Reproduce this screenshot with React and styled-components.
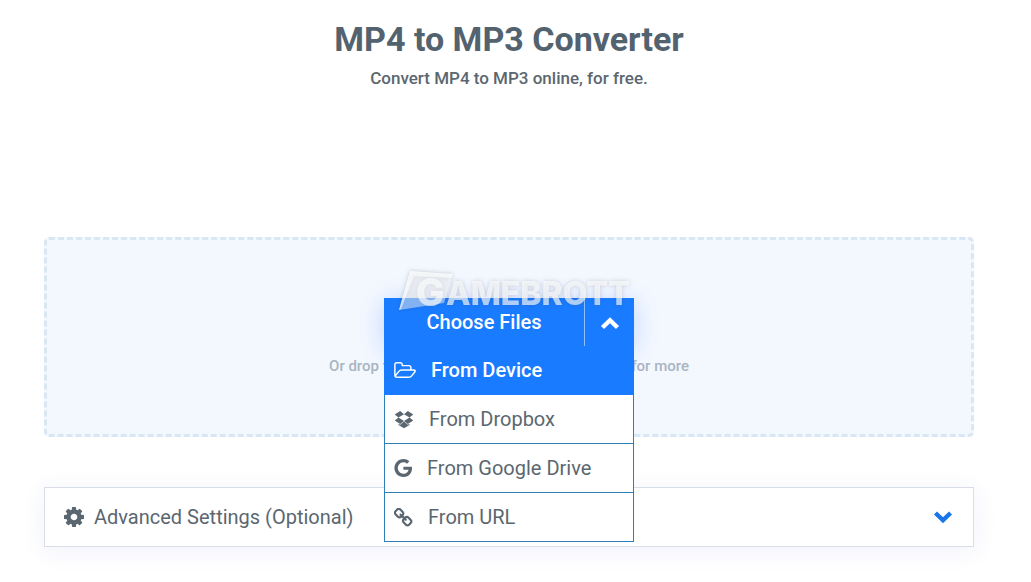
import React, { useState } from 'react'
import styled, { createGlobalStyle } from 'styled-components'

const GlobalStyle = createGlobalStyle`
  * {
    box-sizing: border-box;
  }
  body {
    margin: 0;
    background: #fff;
    font-family: Roboto, sans-serif;
    color: #5b6770;
  }
  button {
    font-family: inherit;
    cursor: pointer;
  }
`

const Page = styled.main`
  padding: 16px 57px 36px 44px;
`

const Header = styled.header`
  height: 221px;
  text-align: center;
  h1 {
    margin: 0;
    font-size: 34px;
    line-height: 46px;
    font-weight: 700;
    color: #53626f;
  }
  p {
    margin: 4px 0 0;
    font-size: 17px;
    line-height: 24px;
    font-weight: 500;
  }
`

const DropZone = styled.section`
  display: flex;
  flex-direction: column;
  align-items: center;
  height: 200px;
  padding-top: 58px;
  background: #f3f8ff;
  border: 3px dashed #d9e6f4;
  border-radius: 5px;
`

const Hint = styled.p`
  margin: 8px 0 0;
  font-size: 15px;
  line-height: 24px;
  font-weight: 500;
  color: #a9b4c0;
`

const Picker = styled.div`
  position: relative;
  width: 250px;
  box-shadow: 0 4px 24px rgba(24, 84, 255, 0.22);
`

const SplitButton = styled.div`
  display: flex;
  height: 48px;
  background: #197bff;
`

const ChooseButton = styled.button`
  flex: 1;
  padding: 0;
  background: none;
  border: 0;
  font-size: 20px;
  font-weight: 500;
  color: #fff;
`

const ToggleButton = styled.button`
  display: flex;
  align-items: center;
  justify-content: center;
  width: 50px;
  padding: 2px 0 0;
  background: none;
  border: 0;
  border-left: 1px solid #8fc0ff;
  color: #fff;
`

const Menu = styled.ul`
  position: absolute;
  top: 48px;
  left: 0;
  z-index: 1;
  width: 100%;
  margin: 0;
  padding: 0;
  list-style: none;
`

const MenuButton = styled.button`
  display: flex;
  align-items: center;
  gap: ${({ $gap }) => $gap}px;
  width: 100%;
  height: 49px;
  padding: 0 9px;
  background: ${({ $active }) => ($active ? '#197bff' : '#fff')};
  border: 1px solid ${({ $active }) => ($active ? '#197bff' : '#2f7fb8')};
  border-top: 0;
  font-size: 20px;
  font-weight: ${({ $active }) => ($active ? 500 : 400)};
  color: ${({ $active }) => ($active ? '#fff' : '#5b6770')};
`

const Watermark = styled.svg`
  position: absolute;
  top: -30px;
  left: 12px;
  z-index: 2;
  pointer-events: none;
  filter: drop-shadow(0 0 2px rgba(60, 70, 90, 0.35));
  text {
    font-family: Inter, sans-serif;
    font-weight: 800;
    fill: #fff;
  }
`

const Settings = styled.button`
  display: flex;
  align-items: center;
  width: 100%;
  height: 60px;
  margin-top: 50px;
  padding: 0 20px 0 19px;
  background: #fff;
  border: 1px solid #d8dde8;
  box-shadow: 0 4px 24px rgba(60, 80, 200, 0.08);
  font-size: 20px;
  color: #5b6770;
  span {
    flex: 1;
    margin-left: 10px;
    text-align: left;
  }
`

const FolderIcon = () => (
  <svg width="22" height="16" viewBox="64 128 1909 1408" fill="currentColor">
    <path d="M1845 931q0-35-53-35h-1088q-40 0-85.500 21.500t-71.500 52.500l-294 363q-18 24-18 40 0 35 53 35h1088q40 0 86-22t71-53l294-363q18-22 18-39zm-1141-163h768v-160q0-40-28-68t-68-28h-576q-40 0-68-28t-28-68v-64q0-40-28-68t-68-28h-320q-40 0-68 28t-28 68v853l256-315q44-53 116-87.500t140-34.500zm1269 163q0 62-46 120l-295 363q-43 53-116 87.500t-140 34.500h-1088q-92 0-158-66t-66-158v-960q0-92 66-158t158-66h320q92 0 158 66t66 158v32h544q92 0 158 66t66 158v160h192q54 0 99 24.500t67 70.500q15 32 15 68z" />
  </svg>
)

const DropboxIcon = () => (
  <svg width="20" height="20" viewBox="0 64 1792 1792" fill="currentColor">
    <path d="M64 558L554 239L896 524L402 829zM1728 558L1238 239L896 524L1390 829zM402 829L896 1134L554 1419L64 1100zM1390 829L896 1134L1238 1419L1728 1100z" />
    <path d="M404 1384V1492L896 1786L1388 1492V1384L1241 1480L896 1195L551 1480z" />
  </svg>
)

const GoogleIcon = () => (
  <svg width="18" height="18" viewBox="96 128 1536 1536" fill="currentColor">
    <path d="M896 786h725q12 67 12 128 0 217-91 387.500t-259.500 266.500-386.500 96q-157 0-299-60.500t-245-163.500-163.500-245-60.500-299 60.500-299 163.500-245 245-163.500 299-60.500q300 0 515 201l-209 201q-123-119-306-119-129 0-238.500 65t-173.500 176.500-64 243.500 64 243.500 173.500 176.500 238.500 65q87 0 160-24t120-60 82-82 51.500-87 22.500-78h-436v-264z" />
  </svg>
)

const LinkIcon = () => (
  <svg width="19" height="19" viewBox="32 32 1664 1664" fill="currentColor">
    <path d="M1456 1216q0-40-28-68l-208-208q-28-28-68-28-42 0-72 32 3 3 19 18.500t21.500 21.500 15 19 13 25.500 3.500 27.500q0 40-28 68t-68 28q-15 0-27.500-3.500t-25.500-13-19-15-21.500-21.500-18.500-19q-33 31-33 73 0 40 28 68l206 207q27 27 68 27 40 0 68-26l147-146q28-28 28-67zm-703-705q0-40-28-68l-206-207q-28-28-68-28-39 0-68 27l-147 146q-28 28-28 67 0 40 28 68l208 208q27 27 68 27 42 0 72-31-3-3-19-18.500t-21.500-21.500-15-19-13-25.500-3.500-27.500q0-40 28-68t68-28q15 0 27.500 3.500t25.500 13 19 15 21.500 21.500 18.500 19q33-31 33-73zm895 705q0 120-85 203l-147 146q-83 83-203 83-121 0-204-85l-206-207q-83-83-83-203 0-123 88-209l-88-88q-86 88-208 88-120 0-204-84l-208-208q-84-84-84-204t85-203l147-146q83-83 203-83 121 0 204 85l206 207q83 83 83 203 0 123-88 209l88 88q86-88 208-88 120 0 204 84l208 208q84 84 84 204z" />
  </svg>
)

const CogIcon = () => (
  <svg width="20" height="20" viewBox="0 128 1536 1536" fill="currentColor">
    <path d="M1024 896q0-106-75-181t-181-75-181 75-75 181 75 181 181 75 181-75 75-181zm512-109v222q0 12-8 23t-20 13l-185 28q-19 54-39 91 35 50 107 138 10 12 10 25t-9 23q-27 37-99 108t-94 71q-12 0-26-9l-138-108q-44 23-91 38-16 136-29 186-7 28-36 28h-222q-14 0-24.500-8.500t-11.500-21.500l-28-184q-49-16-90-37l-141 107q-10 9-25 9-14 0-25-11-126-114-165-168-7-10-7-23 0-12 8-23 15-21 51-66.500t54-70.500q-27-50-41-99l-183-27q-13-2-21-12.500t-8-23.500v-222q0-12 8-23t19-13l186-28q14-46 39-92-40-57-107-138-10-12-10-24 0-10 9-23 26-36 98.500-107.500t94.500-71.500q13 0 26 10l138 107q44-23 91-38 16-136 29-186 7-28 36-28h222q14 0 24.500 8.500t11.500 21.500l28 184q49 16 90 37l142-107q9-9 24-9 13 0 25 10 129 119 165 170 7 8 7 22 0 12-8 23-15 21-51 66.500t-54 70.500q26 50 41 98l183 28q13 2 21 12.500t8 23.500z" />
  </svg>
)

const Chevron = ({ up, color = 'currentColor' }) => (
  <svg width="20" height="14" viewBox="0 0 20 14" fill="none" stroke={color} strokeWidth="4.4" strokeLinejoin="miter">
    <path d={up ? 'M2.500 11.500L10 4.200L17.500 11.500' : 'M2.500 3L10 10.300L17.500 3'} />
  </svg>
)

const sources = [
  { label: 'From Device', icon: <FolderIcon />, gap: 15 },
  { label: 'From Dropbox', icon: <DropboxIcon />, gap: 15 },
  { label: 'From Google Drive', icon: <GoogleIcon />, gap: 15 },
  { label: 'From URL', icon: <LinkIcon />, gap: 15 }
]

const App = () => {
  const [open, setOpen] = useState(true)

  return (
    <>
      <GlobalStyle />
      <Page>
        <Header>
          <h1>MP4 to MP3 Converter</h1>
          <p>Convert MP4 to MP3 online, for free.</p>
        </Header>
        <DropZone>
          <Picker>
            <SplitButton>
              <ChooseButton>Choose Files</ChooseButton>
              <ToggleButton aria-label="Toggle sources" onClick={() => setOpen(!open)}>
                <Chevron up />
              </ToggleButton>
            </SplitButton>
            {open && (
              <Menu>
                {sources.map((item, idx) => (
                  <li key={item.label}>
                    <MenuButton $active={idx === 0} $gap={item.gap}>
                      {item.icon}
                      {item.label}
                    </MenuButton>
                  </li>
                ))}
              </Menu>
            )}
            <Watermark width="240" height="46" viewBox="0 0 240 46">
              <path d="M14 3L57 6L53 18L48 35L3 42z" fill="#fff" fillOpacity="0.45" />
              <path d="M14 3L57 6L55 10L18 8L5 41L3 42z" fill="#fff" fillOpacity="0.6" />
              <text x="20" y="38" fontSize="38" fillOpacity="0.65">G</text>
              <text x="50" y="37" fontSize="32" fillOpacity="0.65">AMEBROTT</text>
            </Watermark>
          </Picker>
          <Hint>Or drop files here. Max file size 1GB. Sign Up for more</Hint>
        </DropZone>
        <Settings>
          <CogIcon />
          <span>Advanced Settings (Optional)</span>
          <Chevron color="#1976e8" />
        </Settings>
      </Page>
    </>
  )
}

export default App
